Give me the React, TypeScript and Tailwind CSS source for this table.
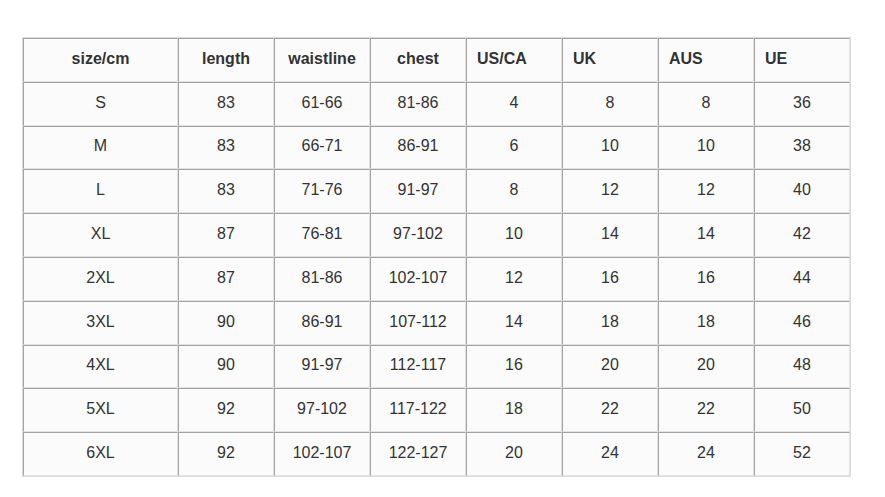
const headers = ['size/cm', 'length', 'waistline', 'chest', 'US/CA', 'UK', 'AUS', 'UE'];

const rows = [
  ['S', '83', '61-66', '81-86', '4', '8', '8', '36'],
  ['M', '83', '66-71', '86-91', '6', '10', '10', '38'],
  ['L', '83', '71-76', '91-97', '8', '12', '12', '40'],
  ['XL', '87', '76-81', '97-102', '10', '14', '14', '42'],
  ['2XL', '87', '81-86', '102-107', '12', '16', '16', '44'],
  ['3XL', '90', '86-91', '107-112', '14', '18', '18', '46'],
  ['4XL', '90', '91-97', '112-117', '16', '20', '20', '48'],
  ['5XL', '92', '97-102', '117-122', '18', '22', '22', '50'],
  ['6XL', '92', '102-107', '122-127', '20', '24', '24', '52'],
];

export default function App() {
  return (
    <div className="w-[885px] h-[497px] bg-white pt-[37px] pl-[22px] font-['Liberation_Sans',Arial,sans-serif] text-[16px] text-[#333]">
      <div className="w-fit border border-[#dcdcdc]">
        <div className="grid grid-cols-[155px_repeat(7,96px)] auto-rows-[43.8px]">
          {headers.map((h, i) => (
            <div
              key={h}
              className={`flex items-center pb-[2px] border-t border-l border-t-[#a3a3a3] border-l-[#a3a3a3] border-r border-b border-r-[#e2e2e2] border-b-[#e2e2e2] bg-[#fbfbfb] font-bold ${
                i < 4 ? 'justify-center' : 'justify-start pl-[10px]'
              }`}
            >
              {h}
            </div>
          ))}
          {rows.map((row, r) =>
            row.map((cell, c) => (
              <div
                key={r + '-' + c}
                className="flex items-center justify-center pb-[2px] border-t border-l border-t-[#a3a3a3] border-l-[#a3a3a3] border-r border-b border-r-[#e2e2e2] border-b-[#e2e2e2] bg-[#fbfbfb]"
              >
                {cell}
              </div>
            ))
          )}
        </div>
      </div>
    </div>
  );
}
